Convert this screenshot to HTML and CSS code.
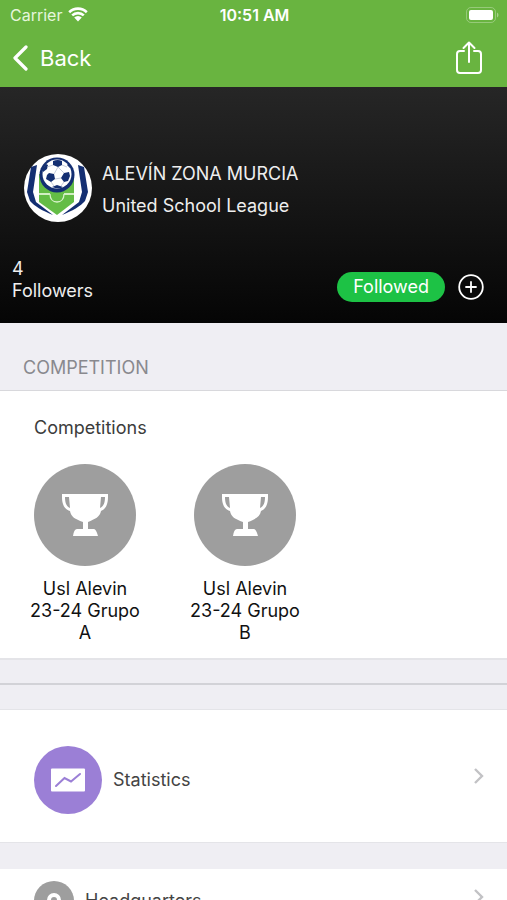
FILE: index.html
```html
<!DOCTYPE html>
<html lang="en">
  <head>
    <meta charset="UTF-8" />
    <meta name="viewport" content="width=device-width, initial-scale=1.0" />
    <title>United School League</title>
    <link rel="stylesheet" href="styles.css">
  </head>
  <body>
    <header class="top">
      <div class="status">
        <div class="carrier">
          Carrier
          <svg class="wifi" viewBox="0 0 20 15" width="20" height="15">
            <path d="M1.2 5.2a12.6 12.6 0 0 1 17.6 0M4.2 8.4a8.4 8.4 0 0 1 11.6 0" fill="none" stroke="#fff" stroke-width="2.6" />
            <path d="M6.2 10.6a5.5 5.5 0 0 1 7.6 0L10 14.5z" fill="#fff" />
          </svg>
        </div>
        <div class="time">10:51 AM</div>
        <svg class="battery" viewBox="0 0 33 16" width="33" height="16">
          <rect x="0.5" y="0.5" width="29" height="15" rx="4.5" fill="none" stroke="#fff" stroke-opacity="0.3" />
          <rect x="3" y="3" width="24" height="10" rx="2" fill="#fff" />
          <path d="M31 5.5c2 1 2 4 0 5z" fill="#fff" fill-opacity="0.4" />
        </svg>
      </div>
      <nav class="nav">
        <a class="back" href="#">
          <svg viewBox="0 0 16 26" width="16" height="26">
            <path d="M14 2 3 13l11 11" fill="none" stroke="#fff" stroke-width="3.2" stroke-linecap="round" stroke-linejoin="round" />
          </svg>
          Back
        </a>
        <button class="icon-btn" aria-label="Share">
          <svg viewBox="0 0 28 34" width="28" height="34">
            <path d="M9 10H5a3 3 0 0 0-3 3v16a3 3 0 0 0 3 3h18a3 3 0 0 0 3-3V13a3 3 0 0 0-3-3h-4M14 21V2M8.5 7 14 1.5 19.5 7" fill="none" stroke="#fff" stroke-width="2" stroke-linecap="round" stroke-linejoin="round" />
          </svg>
        </button>
      </nav>
    </header>
    <main class="content">
      <section class="hero">
        <div class="team">
          <svg class="crest" viewBox="0 0 68 68" width="68" height="68">
            <circle cx="34" cy="34" r="34" fill="#fff" />
            <path d="M15 20h35v28L33 61 15 48z" fill="#64bd46" />
            <path d="M15 40h11M40 40h10M26 40c0 5 3 8 7 8s7-3 7-8" fill="none" stroke="#d9f2cc" stroke-width="1.3" />
            <path d="M7 13l6-2-4 27 3 10 17 13C19 57 10 52 6 47L3 38z" fill="#142f72" />
            <path d="M60 13l-6-2 4 27-3 10-17 13c10-4 19-9 23-14l3-9z" fill="#142f72" />
            <path d="M16 24l2 14h30l2-14z" fill="#64bd46" />
            <path d="M15 40h11M40 40h10" fill="none" stroke="#d9f2cc" stroke-width="1.3" />
            <circle cx="33" cy="21" r="17.5" fill="#142f72" />
            <circle cx="33" cy="20" r="14.5" fill="#fff" />
            <path d="M29 7q5-2 9 0v4l-4 2-5-2zM25 19l5 1 1 5-4 3-5-3 1-4zM40 19l5-1 1 4-2 5-4 1-3-4zM19 14l3-4 2 1-1 4-4 3zM46 14l-3-3 1-1 3 4zM28 33l5-2 6 2-2 1q-4 1-9-1z" fill="#142f72" />
            <path d="M23 13l6-2M38 11l5 2M30 20l4-7 6 6M31 25l6-1M27 28l3 4M40 28l-3 4" fill="none" stroke="#b8bfd0" stroke-width="0.8" />
          </svg>
          <div class="team-text">
            <div>ALEVÍN ZONA MURCIA</div>
            <div>United School League</div>
          </div>
        </div>
        <div class="follow">
          <div class="followers">4<br />Followers</div>
          <button class="followed">Followed</button>
          <button class="icon-btn" aria-label="Add">
            <svg viewBox="0 0 26 26" width="26" height="26">
              <path d="M13 8v10M8 13h10" stroke="#fff" stroke-width="1.8" stroke-linecap="round" />
              <circle cx="13" cy="13" r="11.8" fill="none" stroke="#fff" stroke-width="1.8" />
            </svg>
          </button>
        </div>
      </section>
      <h2 class="section-title">COMPETITION</h2>
      <section class="competitions">
        <h3>Competitions</h3>
        <div class="list">
          <a class="competition" href="#">
            <span class="cup">
              <svg viewBox="0 0 48 46" width="48" height="46">
                <path d="M1 2h46v3c0 7-2 12-7 14-1 6-6 8-13 11v7h6q2 0 4 7H12q1-7 4-7h6v-7C14 27 10 25 9 19 3 17 1 12 1 5zM4 5c0 5 1 9 5 11L8 5zM44 5c0 5-1 9-5 11l1-11z" fill="#fff" fill-rule="evenodd" />
              </svg>
            </span>
            Usl Alevin 23-24 Grupo A
          </a>
          <a class="competition" href="#">
            <span class="cup">
              <svg viewBox="0 0 48 46" width="48" height="46">
                <path d="M1 2h46v3c0 7-2 12-7 14-1 6-6 8-13 11v7h6q2 0 4 7H12q1-7 4-7h6v-7C14 27 10 25 9 19 3 17 1 12 1 5zM4 5c0 5 1 9 5 11L8 5zM44 5c0 5-1 9-5 11l1-11z" fill="#fff" fill-rule="evenodd" />
              </svg>
            </span>
            Usl Alevin 23-24 Grupo B
          </a>
        </div>
      </section>
      <hr class="divider" />
      <a class="row statistics" href="#">
        <span class="label">
          <span class="dot">
            <svg viewBox="0 0 36 24" width="36" height="24">
              <rect x="1" y="0.5" width="34" height="23" rx="1" fill="#fff" />
              <path d="M6 18l8.5-8 6.5 3.5L30 6" fill="none" stroke="#9b7fd6" stroke-width="2" stroke-linecap="round" />
            </svg>
          </span>
          Statistics
        </span>
        <svg class="arrow" viewBox="0 0 12 18" width="12" height="18">
          <path d="M2 2l7 7-7 7" fill="none" stroke="#c2c2c5" stroke-width="2.4" />
        </svg>
      </a>
      <a class="row headquarters" href="#">
        <span class="label">
          <span class="dot">
            <svg viewBox="0 0 16 18" width="16" height="18">
              <path d="M8 1a7 7 0 0 1 7 7c0 4-7 10-7 10S1 12 1 8a7 7 0 0 1 7-7zm0 4a3 3 0 1 0 0 6 3 3 0 0 0 0-6z" fill="#fff" fill-rule="evenodd" />
            </svg>
          </span>
          Headquarters
        </span>
        <svg class="arrow" viewBox="0 0 12 18" width="12" height="18">
          <path d="M2 2l7 7-7 7" fill="none" stroke="#c2c2c5" stroke-width="2.4" />
        </svg>
      </a>
    </main>
  </body>
</html>
```

FILE: styles.css
```css
* {
  box-sizing: border-box;
}
body {
  height: 100vh;
  margin: 0;
  display: flex;
  flex-direction: column;
  background: #efeef3;
  font-family: Inter, "Liberation Sans", sans-serif;
  font-size: 18px;
  line-height: 22px;
  color: #111;
}
a {
  color: inherit;
  text-decoration: none;
}
button {
  border: 0;
  padding: 0;
  font: inherit;
  color: white;
  background: none;
}
svg {
  display: block;
  flex: none;
}

.top {
  background: #69b440;
  color: white;
}
.status {
  height: 29px;
  padding: 0 8px 0 10px;
  display: grid;
  grid-template-columns: 1fr auto 1fr;
  align-items: center;
  font-size: 16px;
}
.carrier {
  display: flex;
  align-items: center;
  gap: 6px;
  color: #e6f6dc;
}
.time {
  font-weight: 600;
}
.battery {
  justify-self: end;
}
.nav {
  height: 58px;
  padding: 0 24px 0 12px;
  display: flex;
  align-items: center;
  justify-content: space-between;
}
.back {
  display: flex;
  align-items: center;
  gap: 12px;
  font-size: 22px;
}
.icon-btn {
  display: flex;
}

.content {
  flex: 1;
  overflow-y: auto;
  scrollbar-width: none;
}
.hero {
  padding: 67px 23px 21px 12px;
  background: linear-gradient(#262626, #050505);
  color: #eee;
}
.team {
  padding-left: 12px;
  display: flex;
  align-items: center;
  gap: 10px;
}
.team-text {
  padding-top: 3px;
  display: grid;
  gap: 10px;
}
.follow {
  margin-top: 36px;
  display: flex;
  align-items: center;
  gap: 13px;
}
.followers {
  flex: 1;
}
.followed {
  margin-top: 14px;
  padding: 4px 16px;
  border-radius: 15px;
  background: #1dc245;
}
.follow .icon-btn {
  margin-top: 14px;
}

.section-title {
  margin: 0;
  padding: 34px 23px 11px;
  border-bottom: 1px solid #d8d8dc;
  font-size: 18px;
  font-weight: 400;
  color: #89898e;
}
.competitions {
  padding: 26px 27px 14px;
  background: white;
  border-bottom: 2px solid #e4e4e8;
}
.competitions h3 {
  margin: 0 7px 25px;
  font-size: 18px;
  font-weight: 400;
  color: #3c3c3c;
}
.list {
  display: flex;
  gap: 44px;
}
.competition {
  width: 116px;
  display: flex;
  flex-direction: column;
  align-items: center;
  gap: 12px;
  text-align: center;
}
.cup {
  width: 102px;
  height: 102px;
  border-radius: 50%;
  background: #9e9e9e;
  display: flex;
  align-items: center;
  justify-content: center;
}
.divider {
  margin: 23px 0 24px;
  border: 0;
  border-top: 2px solid #d2d2d7;
}

.row {
  padding: 0 22px 0 34px;
  display: flex;
  align-items: center;
  justify-content: space-between;
  background: white;
  color: #444;
}
.label {
  padding-top: 8px;
  display: flex;
  align-items: center;
  gap: 11px;
}
.dot {
  width: 68px;
  height: 68px;
  border-radius: 50%;
  background: #9b7fd6;
  display: flex;
  align-items: center;
  justify-content: center;
}
.statistics {
  height: 134px;
  border: solid #e4e4e8;
  border-width: 1px 0;
}
.headquarters {
  height: 56px;
  margin-top: 26px;
}
.headquarters .dot {
  width: 40px;
  height: 40px;
  background: #9e9e9e;
}
```
